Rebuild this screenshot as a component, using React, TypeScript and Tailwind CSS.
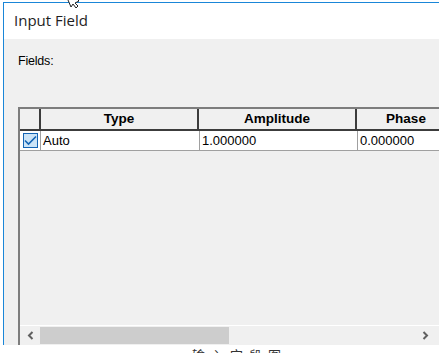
import React from "react";

const cols = [
  { label: "Type", value: "Auto", w: "w-[158px]" },
  { label: "Amplitude", value: "1.000000", w: "w-[158px]" },
  { label: "Phase", value: "0.000000", w: "w-[100px]" },
];

export default function App() {
  return (
    <div className="relative w-[439px] h-[353px] overflow-hidden bg-white font-['Liberation_Sans',Arial,sans-serif] text-black">
      {/* window */}
      <div className="ml-[3px] mt-[2px] h-[343px] flex flex-col border-l border-t border-[#1a86d8]">
        <div className="h-[36px] shrink-0 bg-white pl-[10px] pt-[7px] font-['Open_Sans',sans-serif] text-[15px] leading-[20px] text-[#1e1e1e]">
          Input Field
        </div>
        <div className="flex-1 flex flex-col bg-[#f0f0f0] pl-[14px]">
          <div className="pt-[15px] text-[12.5px] leading-[15px] tracking-[-0.2px]">Fields:</div>
          <div className="mt-[38px] flex-1 flex flex-col border-l-2 border-t-2 border-[#7d7d7d]">
            {/* header */}
            <div className="flex h-[22px] shrink-0 border-b-2 border-[#3c3c3c] bg-[#f0f0f0]">
              <div className="w-[21px] shrink-0 border-r-2 border-[#3c3c3c]" />
              {cols.map((c) => (
                <div
                  key={c.label}
                  className={`${c.w} shrink-0 border-r-2 border-[#3c3c3c] flex items-center justify-center text-[13.5px] font-bold leading-[16px]`}
                >
                  {c.label}
                </div>
              ))}
            </div>
            {/* data row */}
            <div className="flex h-[20px] shrink-0 border-b border-[#a0a0a0] bg-white">
              <div className="w-[21px] shrink-0 border-r border-[#a0a0a0] flex items-center justify-center">
                <div className="w-[15px] h-[15px] border border-[#1464b4] bg-[#cce4f7] flex items-center justify-center">
                  <svg width="13" height="11" viewBox="0 0 13 11">
                    <path d="M1 5.5 L4.5 9 L12 1.5" fill="none" stroke="#1464b4" strokeWidth="1.6" />
                  </svg>
                </div>
              </div>
              <div className="w-[159px] shrink-0 border-r border-[#a0a0a0] pl-[2px] text-[13px] leading-[19px]">Auto</div>
              <div className="w-[158px] shrink-0 border-r border-[#a0a0a0] pl-[2px] text-[13px] leading-[19px]">1.000000</div>
              <div className="w-[100px] shrink-0 pl-[2px] text-[13px] leading-[19px]">0.000000</div>
            </div>
            <div className="flex-1" />
            {/* horizontal scrollbar */}
            <div className="h-[20px] shrink-0 border-t border-white bg-[#f0f0f0] flex items-center">
              <div className="w-[20px] flex justify-center">
                <svg width="7" height="9" viewBox="0 0 7 9">
                  <path d="M5.5 1 L2 4.5 L5.5 8" fill="none" stroke="#606060" strokeWidth="2" />
                </svg>
              </div>
              <div className="w-[189px] h-[17px] bg-[#cdcdcd]" />
              <div className="flex-1" />
              <div className="w-[20px] mr-[4px] flex justify-center">
                <svg width="7" height="9" viewBox="0 0 7 9">
                  <path d="M1.5 1 L5 4.5 L1.5 8" fill="none" stroke="#606060" strokeWidth="2" />
                </svg>
              </div>
            </div>
          </div>
        </div>
      </div>
      {/* caption cut off below */}
      <div className="h-[8px] overflow-hidden flex justify-center">
        <div className="pt-[2px] pl-[40px] text-[13px] leading-[16px] tracking-[6px] text-[#333] font-['Noto_Sans_CJK_SC',sans-serif]">
          输入字段图
        </div>
      </div>
      {/* mouse cursor */}
      <svg className="absolute left-[66px] top-0" width="16" height="10" viewBox="0 0 16 10">
        <path d="M2 0 L5 7 L7 4 L10 8 L12 6 L9 3 L13 1 L12 0" fill="white" stroke="#222" strokeWidth="1" />
      </svg>
    </div>
  );
}
